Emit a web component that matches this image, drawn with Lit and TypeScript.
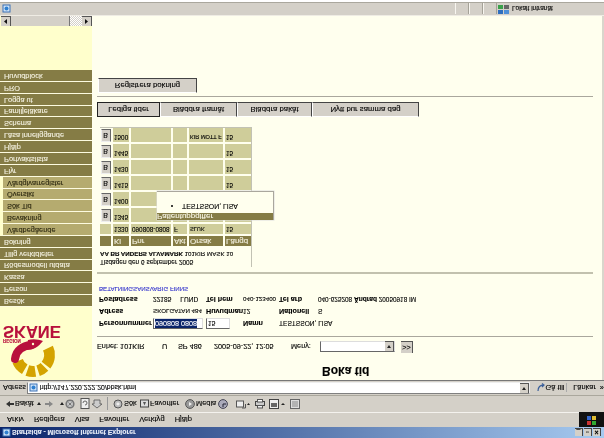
import { LitElement, html, css, svg } from "lit";
import { customElement } from "lit/decorators.js";

const MENU = ["Arkiv", "Redigera", "Visa", "Favoriter", "Verktyg", "Hjälp"];
const SIDE: [string, boolean][] = [
  ["Besök", false], ["Person", false], ["Kassa", false], ["Rödesmodell utdata", false],
  ["Tillg verktdleter", false], ["Bokning", false], ["Vårdbegående", true], ["Bevakning", true],
  ["Sök Tid", true], ["Översikt", true], ["Vårdgivarregister", true], ["Flyr", false],
  ["Portvaktslista", false], ["Hjälp", false], ["Läsa inneliggande", false], ["Schema", false],
  ["Familjeläkare", false], ["Logga ut", false], ["PRO", false], ["Huvudblock", false],
];
const ROWS = [
  ["1345", "", "", "", "15"], ["1400", "", "", "", "15"], ["1415", "", "", "", "15"],
  ["1430", "", "", "", "15"], ["1445", "", "", "", "15"], ["1500", "", "", "KIR MOTT F", "15"],
];

function wedge(a0: number, a1: number) {
  const cx = 33, cy = 25, r1 = 11, r2 = 22;
  const p = (r: number, a: number) => {
    const t = (a * Math.PI) / 180;
    return `${(cx + r * Math.cos(t)).toFixed(1)} ${(cy - r * Math.sin(t)).toFixed(1)}`;
  };
  return `M${p(r1, a0)}L${p(r2, a0)}A${r2} ${r2} 0 0 0 ${p(r2, a1)}L${p(r1, a1)}A${r1} ${r1} 0 0 1 ${p(r1, a0)}Z`;
}

const logo = svg`<svg class="logo-mark" width="70" height="38" viewBox="0 0 70 38">
  <path fill="#d4a300" d="${wedge(-25, 38)}"/>
  <path fill="#d4a300" d="${wedge(46, 72)}"/>
  <path fill="#d4a300" d="${wedge(82, 110)}"/>
  <path fill="#d4a300" d="${wedge(120, 158)}"/>
  <path fill="none" stroke="#b8103c" stroke-width="8" stroke-linecap="round" d="M15 21C16 30 23 34 31 35"/>
  <path fill="#b8103c" d="M26 30C34 30 38 33 43 39C38 41 32 41 28 40Z"/>
  <circle cx="33" cy="36" r="1.2" fill="#ffffcc"/>
</svg>`;

const ico: Record<string, unknown> = {
  back: svg`<svg width="8" height="8" viewBox="0 0 8 8"><path d="M0 4L4 1V3H8V5H4V7Z" fill="#333"/></svg>`,
  fwd: svg`<svg width="8" height="8" viewBox="0 0 8 8"><path d="M8 4L4 1V3H0V5H4V7Z" fill="#888"/></svg>`,
  caret: svg`<svg width="4" height="3" viewBox="0 0 4 3"><path d="M0 0H4L2 3Z" fill="#222"/></svg>`,
  stop: svg`<svg width="10" height="10" viewBox="0 0 10 10"><circle cx="5" cy="5" r="4.6" fill="#777"/><circle cx="5" cy="5" r="3" fill="#c4c4c4"/><path d="M3.5 3.5L6.5 6.5M6.5 3.5L3.5 6.5" stroke="#777"/></svg>`,
  refresh: svg`<svg width="10" height="11" viewBox="0 0 10 11"><rect x="1" y=".5" width="8" height="10" fill="#eee" stroke="#555"/><path d="M3 6a2 2 0 1 0 2-2" fill="none" stroke="#666"/></svg>`,
  home: svg`<svg width="10" height="10" viewBox="0 0 10 10"><path d="M0 5L5 1L10 5H8V9H2V5Z" fill="#ccc" stroke="#555" stroke-width=".8"/></svg>`,
  search: svg`<svg width="10" height="10" viewBox="0 0 10 10"><circle cx="5" cy="5" r="4" fill="#bbb" stroke="#555"/><circle cx="5" cy="5" r="1.6" fill="#eee"/></svg>`,
  fav: svg`<svg width="9" height="9" viewBox="0 0 9 9"><rect x=".5" y="1" width="8" height="7" fill="#ddd" stroke="#444"/><path d="M4.5 2.5L6 6H3Z" fill="#555"/></svg>`,
  media: svg`<svg width="10" height="10" viewBox="0 0 10 10"><circle cx="5" cy="5" r="4.4" fill="#999" stroke="#555"/><path d="M4 3L7 5L4 7Z" fill="#eee"/></svg>`,
  hist: svg`<svg width="10" height="10" viewBox="0 0 10 10"><circle cx="5" cy="5" r="4.4" fill="#aab" stroke="#445"/><path d="M5 2V5H8" stroke="#223" fill="none"/></svg>`,
  mail: svg`<svg width="14" height="10" viewBox="0 0 14 10"><rect x=".5" y="2" width="7" height="6" fill="#eee" stroke="#555"/><path d="M6 1H9.5V5" fill="none" stroke="#555"/><path d="M11 4H14L12.5 6Z" fill="#222"/></svg>`,
  print: svg`<svg width="10" height="10" viewBox="0 0 10 10"><rect x=".5" y="3.5" width="9" height="4" fill="#ccc" stroke="#444"/><rect x="2.5" y="1" width="5" height="2.5" fill="#eee" stroke="#555"/><rect x="2.5" y="7" width="5" height="2.5" fill="#fff" stroke="#555"/></svg>`,
  edit: svg`<svg width="16" height="10" viewBox="0 0 16 10"><rect x=".5" y=".5" width="9" height="9" fill="#eee" stroke="#444"/><rect x="2" y="2" width="6" height="4" fill="#666"/><path d="M12 4H16L14 6Z" fill="#222"/></svg>`,
  disc: svg`<svg width="10" height="10" viewBox="0 0 10 10"><rect x=".5" y=".5" width="9" height="9" fill="#ddd" stroke="#666"/><path d="M2 3H8M2 5H8M2 7H8" stroke="#888"/></svg>`,
  ie: svg`<svg width="9" height="9" viewBox="0 0 9 9"><rect x="1" y="1" width="7" height="7" fill="#cfe3f7" stroke="#3a70b5"/><circle cx="4.5" cy="4.5" r="2" fill="#2f80d0"/></svg>`,
  zone: svg`<svg width="11" height="10" viewBox="0 0 11 10"><rect x="0" y="0" width="5" height="4" fill="#2f6fc0"/><rect x="6" y="0" width="5" height="4" fill="#4e8fd8"/><rect x="0" y="5" width="5" height="4" fill="#3aa04a"/><rect x="6" y="5" width="5" height="4" fill="#666"/></svg>`,
  go: svg`<svg width="8" height="9" viewBox="0 0 8 9"><path d="M1 1C1 5 3 7 7 7M5 5L7 7L5 8.5" fill="none" stroke="#3a5f9a" stroke-width="1.2"/></svg>`,
  flag: svg`<svg width="11" height="10" viewBox="0 0 11 10"><rect x="1" y="0" width="4" height="4" fill="#c33"/><rect x="6" y="0" width="4" height="4" fill="#3a3"/><rect x="1" y="5" width="4" height="4" fill="#36c"/><rect x="6" y="5" width="4" height="4" fill="#db3"/></svg>`,
  left: svg`<svg width="3" height="5" viewBox="0 0 3 5"><path d="M3 0V5L0 2.5Z" fill="#111"/></svg>`,
  right: svg`<svg width="3" height="5" viewBox="0 0 3 5"><path d="M0 0V5L3 2.5Z" fill="#111"/></svg>`,
};

const TOOLS: [string | null, string, number][] = [
  ["back", "Bakåt", 31], ["caret", "", 8], ["fwd", "", 15], ["caret", "", 5], ["stop", "", 15],
  ["refresh", "", 12], ["home", "", 15], [null, "", 6], ["search", "Sök", 27], ["fav", "Favoriter", 45],
  ["media", "Media", 33], ["hist", "", 18], ["mail", "", 19], ["print", "", 14], ["edit", "", 21], ["disc", "", 12],
];

@customElement("app-root")
export class AppRoot extends LitElement {
  static styles = css`
    :host { display: block; width: 604px; height: 438px; overflow: hidden; transform: scaleY(-1);
      font: 7.4px "Liberation Sans", Arial, sans-serif; color: #000; background: #d4d0c8; }
    * { box-sizing: border-box; }
    .window { display: flex; flex-direction: column; height: 438px; filter: blur(0.2px); white-space: nowrap; -webkit-text-stroke: .12px currentColor; }
    .title { height: 11px; display: flex; align-items: center; padding: 0 3px 0 2px; color: #e8eef8; font-weight: bold; font-size: 6.9px;
      background: linear-gradient(90deg, #0a246a, #a6caf0); flex: none; }
    .title .name { margin-left: 1px; flex: 1; }
    .wbtns { display: flex; gap: 1px; }
    .wbtn { width: 8px; height: 8px; background: #d4d0c8; border-right: 1px solid #444; border-bottom: 1px solid #444;
      font-size: 7px; line-height: 7px; text-align: center; color: #000; font-weight: bold; }
    .menu { height: 15px; display: flex; align-items: center; padding-left: 7px; flex: none; position: relative; border-bottom: 1px solid #f4f2ee; font-size: 7.6px; }
    .menu span { margin-right: 10px; }
    .flag { margin-left: auto; width: 25px; height: 15px; background: #111; display: flex; align-items: center; justify-content: center; }
    .toolbar { height: 17px; display: flex; align-items: center; padding-left: 6px; flex: none; border-bottom: 1px solid #aaa79d; }
    .tool { display: flex; align-items: center; gap: 1px; flex: none; }
    .sep { width: 1px; height: 13px; background: #999; }
    .address { height: 14px; display: flex; align-items: center; padding-left: 3px; flex: none; }
    .address .lbl { width: 24px; }
    .urlbox { width: 508px; height: 12px; background: #fff; border: 1px solid #808080; border-bottom-color: #eee; border-right-color: #eee; font-size: 6.9px;
      display: flex; align-items: center; gap: 2px; padding-left: 1px; }
    .urlbox .url { flex: 1; }
    .drop { width: 9px; height: 10px; background: #d4d0c8; border-right: 1px solid #555; border-bottom: 1px solid #555;
      display: flex; align-items: center; justify-content: center; }
    .go { display: flex; align-items: center; gap: 1px; margin-left: 7px; width: 31px; border-right: 1px solid #aaa; }
    .links { margin-left: 6px; }
    .links b { margin-left: 4px; font-weight: normal; }
    .content { flex: none; height: 366px; display: flex; background: #ffffee; border-top: 1px solid #777; border-bottom: 1px solid #efece4; }
    aside { width: 92px; flex: none; background: #ffffcc; display: flex; flex-direction: column; }
    .logo { height: 73px; display: flex; flex-direction: column; flex: none; }
    .logo-mark { display: block; overflow: visible; flex: none; }
    .region { font-size: 4.5px; color: #b8103c; font-weight: bold; line-height: 4px; margin: 0 0 0 3px; height: 4px; }
    .skane { font-size: 16.5px; line-height: 13px; font-weight: bold; color: #b8103c; margin-left: 3px; }
    .item { height: 11.85px; background: #857c45; color: #f3f0df; padding-left: 4px; line-height: 10.5px; border-top: 1px solid #fdfbe0; flex: none; }
    .item.sub { background: #b5ab6f; color: #2c2810; padding-left: 4px; border-left: 3px solid #ffffcc; }
    .spacer { flex: 1; }
    .hscroll { height: 10px; margin-left: 1px; display: flex; background: #d4d0c8; flex: none; }
    .arrow { width: 10px; background: #d4d0c8; border-right: 1px solid #555; border-bottom: 1px solid #555; display: flex; align-items: center; justify-content: center; flex: none; }
    .thumb { flex: 1; border-right: 1px solid #777; }
    .track { width: 12px; background: repeating-conic-gradient(#fff 0 25%, #d4d0c8 0 50%) 0 0 / 2px 2px; }
    main { flex: 1; padding: 0 10px 0 5px; display: flex; flex-direction: column; position: relative; border-right: 2px solid #d9d6cc; min-width: 0; }
    h1 { margin: 3px 0 0 225px; height: 12px; font-size: 12px; line-height: 12px; font-weight: bold; }
    .enhet { margin-top: 11px; height: 14px; display: flex; align-items: center; font-size: 7.3px; flex: none; }
    .enhet span { flex: none; }
    .e1 { width: 65px; } .e2 { width: 16px; } .e3 { width: 36px; } .e4 { width: 77px; } .e5 { width: 29px; }
    .select { width: 75px; height: 11px; background: #fff; border: 1px solid #666; border-bottom-color: #ddd; border-right-color: #ddd;
      display: flex; justify-content: flex-end; flex: none; }
    .mini { width: 12px; height: 12px; margin-left: 6px; background: #d4d0c8; border-right: 1px solid #555; border-bottom: 1px solid #555;
      text-align: center; line-height: 11px; flex: none; }
    hr { border: 0; margin: 0; width: 496px; height: 1px; background: #aaa79d; flex: none; }
    hr.thick { height: 2px; background: #c2c1ae; }
    .hr1 { margin-top: 3px; }
    .info { margin: 6px 0 0 2px; display: grid; grid-template-columns: 54px 53px 37px 36px 39px auto; grid-auto-rows: 12px; align-items: center; height: 36px; font-size: 6.6px; flex: none; }
    .info b { font-weight: bold; font-size: 7.2px; }
    .wide { grid-column: 5 / 7; }
    .tiny { font-size: 6.4px; }
    .tiny b { font-size: 6.6px !important; }
    .nar { font-size: 6.2px; }
    .inp { height: 11px; border: 1px solid #666; border-bottom-color: #ddd; border-right-color: #ddd; background: #fff; display: flex; align-items: center; padding-left: 1px; }
    .inp.w1 { width: 50px; } .inp.w2 { width: 24px; }
    .sel { background: #0a246a; color: #fff; font-size: 7.2px; }
    .sp { display: inline-block; width: 9px; }
    .link { margin: 0 0 0 2px; color: #3333cc; font-size: 6.1px; line-height: 10px; height: 10px; flex: none; }
    .hr2 { margin-top: 10px; }
    .panel { width: 152px; height: 140px; margin: 5px 0 0 3px; border-right: 1px solid #c2c2b4; border-bottom: 1px solid #c2c2b4; padding-top: 1px; position: relative; flex: none; font-size: 6.5px; }
    .panel p { margin: 0; line-height: 8px; height: 8px; }
    .panel .who { font-weight: bold; font-size: 6.2px; }
    .panel .who span { font-weight: normal; }
    .grid { display: grid; margin: 4px 0 0 0; grid-template-columns: 11px 16px 40px 14px 34px 26px; grid-template-rows: 10px 10px repeat(6, 14px); gap: 2px; font-size: 6.4px; }
    .c { background: #cfcd9a; padding-left: 1px; line-height: 10px; overflow: hidden; }
    .c.caps { font-size: 5.6px; }
    .h { background: #857c45; color: #f3f0df; font-size: 8px; }
    .btnc { display: flex; justify-content: center; }
    .b { width: 10px; height: 13px; background: #d4d0c8; border: 1px solid #666; border-left-color: #eee; border-top-color: #eee; text-align: center; line-height: 11px; font-size: 7px; }
    .pop { position: absolute; left: 57px; top: 47px; width: 117px; height: 29px; background: #ffffee; border-right: 1px solid #aaa79d; border-bottom: 1px solid #aaa79d; box-shadow: 0 0 0 .5px #ddd; }
    .pop .ph { height: 7px; background: #857c45; color: #f8f6e6; line-height: 7px; font-size: 8px; }
    .pop ul { margin: 2px 0 0; padding: 0 0 0 25px; line-height: 10px; font-size: 6.9px; }
    .tabs { display: flex; margin-top: 10px; flex: none; font-size: 7.8px; }
    .tab, .reg { height: 15px; background: #d4d0c8; border: 1px solid #fff; border-right-color: #444; border-bottom-color: #444; text-align: center; line-height: 13px; flex: none; font-size: 7.8px; }
    .tab.act { border: 1px solid #222; }
    .t1 { width: 63px; } .t2 { width: 77px; } .t3 { width: 75px; } .t4 { width: 107px; }
    .hr3 { margin-top: 5px; }
    .reg { width: 99px; margin: 3px 0 0 1px; }
    .status { height: 13px; display: flex; align-items: center; padding-left: 2px; flex: none; border-bottom: 1px solid #aaa79d; }
    .status .fill { flex: 1; margin-left: 2px; }
    .cell { width: 14px; height: 11px; border-left: 1px solid #f8f6f0; border-right: 1px solid #a5a298; flex: none; }
    .zone { width: 107px; display: flex; align-items: center; gap: 3px; height: 11px; padding-left: 1px; flex: none; font-size: 6.5px; }
    .tail { height: 2px; background: #fff; flex: none; }
  `;

  private tool([i, l, w]: [string | null, string, number]) {
    return html`<div class="tool" style="width:${w}px">
      ${i ? ico[i] : html`<div class="sep"></div>`}${l ? html`<span>${l}</span>` : ""}
    </div>`;
  }

  private cell(v: string) {
    return html`<div class="c ${/[A-Z]{2}/.test(v) ? "caps" : ""}">${v}</div>`;
  }

  render() {
    return html`<div class="window">
      <div class="title">${ico.ie}<span class="name">Startsida - Microsoft Internet Explorer</span>
        <div class="wbtns"><div class="wbtn">_</div><div class="wbtn">▫</div><div class="wbtn">×</div></div>
      </div>
      <div class="menu">${MENU.map((m) => html`<span>${m}</span>`)}<div class="flag">${ico.flag}</div></div>
      <div class="toolbar">${TOOLS.map((t) => this.tool(t))}</div>
      <div class="address">
        <span class="lbl">Adress</span>
        <div class="urlbox">${ico.ie}<span class="url">http://147.220.222.20/bbsk.html</span><div class="drop">${ico.caret}</div></div>
        <div class="go">${ico.go}<span>Gå till</span></div>
        <span class="links">Länkar<b>»</b></span>
      </div>
      <div class="content">
        <aside>
          <div class="logo">${logo}<div class="region">REGION</div><div class="skane">SKANE</div></div>
          ${SIDE.map(([n, s]) => html`<div class="item ${s ? "sub" : ""}">${n}</div>`)}
          <div class="spacer"></div>
          <div class="hscroll"><div class="arrow">${ico.left}</div><div class="thumb"></div><div class="track"></div><div class="arrow">${ico.right}</div></div>
        </aside>
        <main>
          <h1>Boka tid</h1>
          <div class="enhet">
            <span class="e1">Enhet: 101KIR</span><span class="e2">U</span><span class="e3">SP 486</span>
            <span class="e4">2005-09-22, 12:05</span><span class="e5">Meny:</span>
            <div class="select"><div class="drop">${ico.caret}</div></div><div class="mini">&gt;&gt;</div>
          </div>
          <hr class="hr1" />
          <div class="info">
            <b>Personnummer</b><div class="inp w1"><span class="sel">090808 0808</span></div><div class="inp w2">15</div><b>Namn</b><span class="wide">TESTSSON, LISA</span>
            <b>Adress</b><span class="nar">SKOLGATAN 484</span><b>Huvudman</b><span>12</span><b>Nationell</b><span>S</span>
            <b>Postadress</b><span>22185<span class="sp"></span>LUND</span><b>Tel hem</b><span class="nar">040-123400</span><b>Tel arb</b><span class="tiny">040-625208 <b>Ändrad</b> 20050918 IM</span>
          </div>
          <div class="link">BETALNINGSANSVARIG FINNS</div>
          <hr class="thick hr2" />
          <div class="panel">
            <p>Tisdagen den 6 september 2005</p>
            <p class="who">AA BR ANDERS ALVAMARK <span>101KIR MASK 10</span></p>
            <div class="grid">
              <div class="c h"></div>${["Kl", "Pnr", "Akt", "Orsak", "Längd"].map((h) => html`<div class="c h">${h}</div>`)}
              <div class="c"></div>${["1330", "090808-0808", "F", "SLUK", "15"].map((h) => this.cell(h))}
              ${ROWS.map((r) => html`<div class="btnc"><div class="b">B</div></div>${r.map((v) => this.cell(v))}`)}
            </div>
            <div class="pop"><div class="ph">Patientuppgifter</div><ul><li>TESTSSON, LISA</li></ul></div>
          </div>
          <div class="tabs">
            <div class="tab act t1">Lediga tider</div><div class="tab t2">Bläddra framåt</div>
            <div class="tab t3">Bläddra bakåt</div><div class="tab t4">Nytt bur samma dag</div>
          </div>
          <hr class="hr3" />
          <div class="reg">Registrera bokning</div>
        </main>
      </div>
      <div class="status">${ico.ie}<span class="fill"></span><div class="cell"></div><div class="cell"></div><div class="cell"></div>
        <div class="zone">${ico.zone}<span>Lokalt intranät</span></div></div>
      <div class="tail"></div>
    </div>`;
  }
}
